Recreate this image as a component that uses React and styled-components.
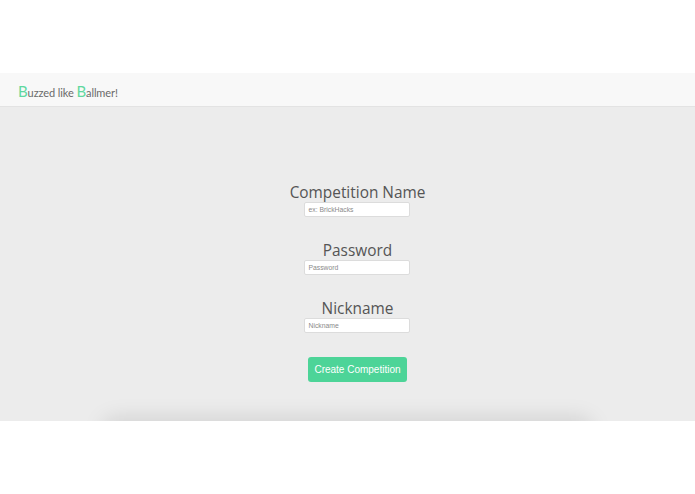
import React from "react"
import styled, { createGlobalStyle } from "styled-components"

const GlobalStyle = createGlobalStyle`
  html, body {
    margin: 0;
    padding: 0;
    background: #fff;
    font-family: "Open Sans", "Liberation Sans", sans-serif;
  }
`

const App = () => {
  return (
    <>
      <GlobalStyle />
      <Page>
        <TopSpace />
        <Navbar>
          <Brand>
            <Accent>B</Accent>uzzed like <Accent>B</Accent>allmer!
          </Brand>
        </Navbar>
        <Main>
          <Form>
            <Field>
              <Label>Competition Name</Label>
              <Input placeholder="ex: BrickHacks" />
            </Field>
            <Field>
              <Label>Password</Label>
              <Input type="password" placeholder="Password" />
            </Field>
            <Field>
              <Label>Nickname</Label>
              <Input placeholder="Nickname" />
            </Field>
            <Button>Create Competition</Button>
          </Form>
          <Shadow />
        </Main>
      </Page>
    </>
  )
}

export default App

const Page = styled.div`
  width: 695px;
  min-height: 494px;
  display: flex;
  flex-direction: column;
`

const TopSpace = styled.div`
  height: 73px;
`

const Navbar = styled.div`
  height: 33px;
  background: #f8f8f8;
  border-bottom: 1px solid #e3e3e3;
  display: flex;
  align-items: center;
  padding-left: 18px;
`

const Brand = styled.div`
  font-family: Lato, "Open Sans", sans-serif;
  font-size: 11px;
  color: #6a6a6a;
  letter-spacing: -0.1px;
  padding-top: 2px;
`

const Accent = styled.span`
  color: #5fd8a0;
  font-size: 15px;
`

const Main = styled.div`
  position: relative;
  height: 314px;
  background: #ececec;
  overflow: hidden;
  display: flex;
  justify-content: center;
`

const Form = styled.div`
  display: flex;
  flex-direction: column;
  align-items: center;
  padding-top: 77px;
  margin-left: 20px;
  position: relative;
  z-index: 1;
`

const Field = styled.div`
  display: flex;
  flex-direction: column;
  align-items: center;
  margin-bottom: 25px;
`

const Label = styled.div`
  font-size: 15.4px;
  color: #555;
  line-height: 18px;
`

const Input = styled.input`
  box-sizing: border-box;
  width: 106px;
  height: 15px;
  border: 1px solid #dcdcdc;
  border-radius: 2px;
  background: #fff;
  font-family: "Liberation Sans", Arial, sans-serif;
  font-size: 6.8px;
  padding: 0 3px;
  outline: none;

  &::placeholder {
    color: #8a8a8a;
  }
`

const Button = styled.button`
  margin-top: -1px;
  width: 99px;
  height: 25px;
  border: none;
  border-radius: 3px;
  background: #4dd498;
  color: #fff;
  font-family: "Liberation Sans", Arial, sans-serif;
  font-size: 10px;
  cursor: pointer;
`

const Shadow = styled.div`
  position: absolute;
  left: 105px;
  right: 105px;
  bottom: -20px;
  height: 20px;
  box-shadow: 0 0 22px 2px rgba(0, 0, 0, 0.13);
  border-radius: 20px;
`
